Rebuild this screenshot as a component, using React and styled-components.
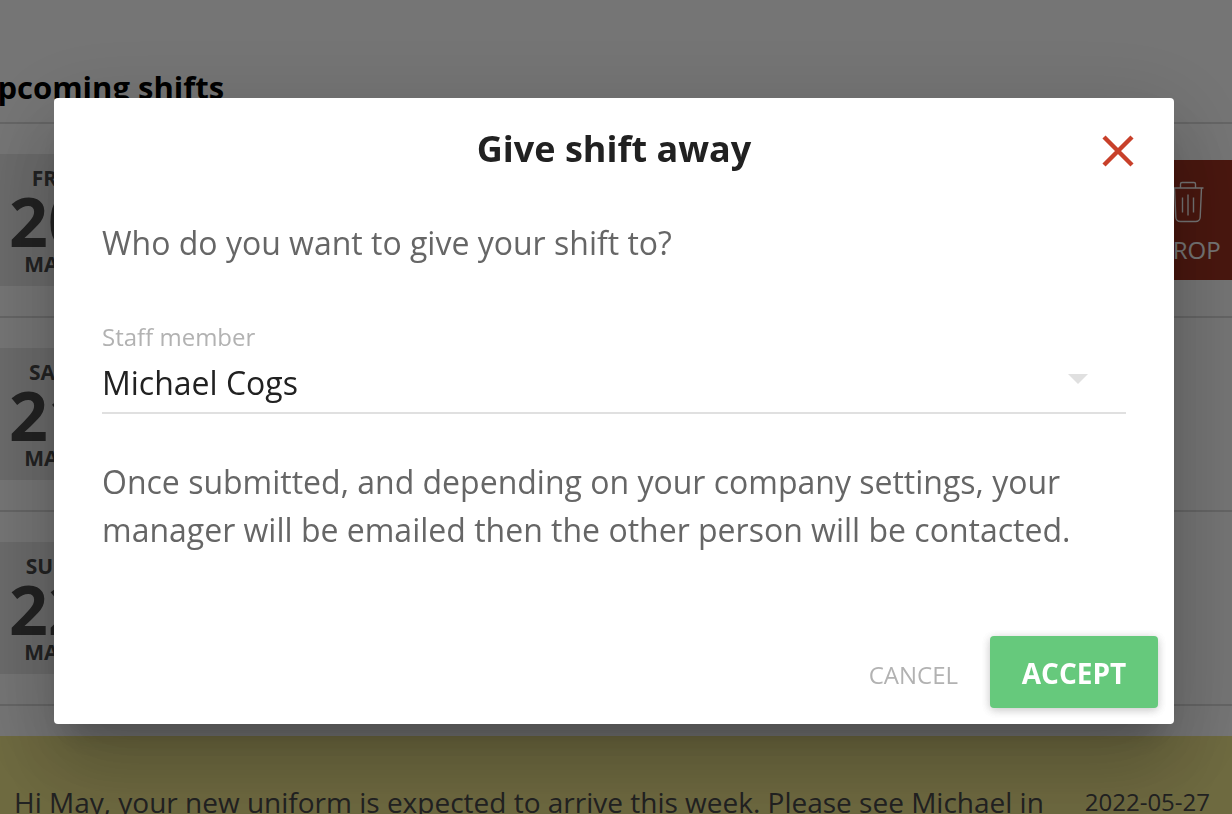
import React, { useState } from "react";
import styled, { createGlobalStyle } from "styled-components";

const GlobalStyle = createGlobalStyle`
  * { box-sizing: border-box; }
  body {
    margin: 0;
    background: #fff;
    color: #4a4a4a;
    font-family: "Open Sans", "Noto Sans", sans-serif;
  }
  h1, h2, p, ul { margin: 0; padding: 0; }
  button, select { font-family: inherit; border: 0; }
`;

const Page = styled.main`
  display: flex;
  flex-direction: column;
  height: 100vh;
  overflow: hidden;
`;

const Shifts = styled.section`
  margin: 0 -16px 0 -26px;
  padding-top: 64px;
`;

const Heading = styled.h1`
  height: 60px;
  border-bottom: 2px solid #dcdcdc;
  color: #000;
  font-size: 31px;
  font-weight: 700;
  line-height: 46px;
`;

const ShiftList = styled.ul`
  list-style: none;
`;

const ShiftRow = styled.li`
  display: flex;
  align-items: center;
  justify-content: space-between;
  padding: 30px 0;
  border-bottom: 2px solid #dcdcdc;
`;

const DateTile = styled.div`
  display: flex;
  flex-direction: column;
  align-items: center;
  justify-content: center;
  width: 148px;
  height: 132px;
  padding-top: 2px;
  background: #e8e8e8;
  font-weight: 700;
`;

const DatePart = styled.span`
  font-size: 21px;
  line-height: 24px;
`;

const DayNumber = styled.span`
  font-size: 68px;
  line-height: 62px;
`;

const DropButton = styled.button`
  display: flex;
  flex-direction: column;
  align-items: center;
  gap: 10px;
  width: 120px;
  height: 120px;
  padding: 20px 0 0;
  background: #a03220;
  color: #fff;
  font-size: 24px;
  line-height: 32px;
`;

const Notice = styled.section`
  display: flex;
  align-items: flex-start;
  justify-content: space-between;
  flex: 1 0 auto;
  margin-top: 30px;
  padding: 46px 22px 0 14px;
  background: #f0e68c;
`;

const NoticeText = styled.p`
  font-size: 28px;
  line-height: 40px;
`;

const NoticeDate = styled.time`
  font-size: 24px;
  line-height: 40px;
`;

const Overlay = styled.div`
  position: fixed;
  inset: 0;
  padding: 98px 58px 0 54px;
  background: rgba(0, 0, 0, 0.54);
`;

const Dialog = styled.div`
  display: flex;
  flex-direction: column;
  padding: 28px 16px 16px 48px;
  border-radius: 4px;
  background: #fff;
  box-shadow: 0 22px 30px -14px rgba(0, 0, 0, 0.2),
    0 48px 76px 6px rgba(0, 0, 0, 0.14), 0 18px 92px 16px rgba(0, 0, 0, 0.12);
`;

const DialogHeader = styled.header`
  display: grid;
  grid-template-columns: 24px 1fr 32px;
  align-items: end;
  padding-right: 24px;
`;

const Title = styled.h2`
  grid-column: 2;
  color: #212121;
  font-size: 36px;
  font-weight: 700;
  line-height: 46px;
  text-align: center;
`;

const CloseButton = styled.button`
  display: flex;
  padding: 0;
  margin-bottom: 5px;
  background: none;
  color: #c8402a;
`;

const DialogBody = styled.div`
  padding: 47px 32px 82px 0;
`;

const BodyText = styled.p`
  color: #666;
  font-size: 32px;
  line-height: 48px;
`;

const Field = styled.div`
  position: relative;
  display: flex;
  flex-direction: column;
  gap: 6px;
  margin: 54px 0 44px;
`;

const FieldLabel = styled.label`
  color: #b2b2b2;
  font-size: 24px;
  line-height: 32px;
`;

const Select = styled.select`
  appearance: none;
  width: 100%;
  height: 55px;
  padding: 0 64px 5px 0;
  border-bottom: 2px solid #e0e0e0;
  border-radius: 0;
  background: transparent;
  color: #212121;
  font-size: 32px;
  line-height: 48px;
`;

const SelectArrow = styled.span`
  position: absolute;
  right: 38px;
  bottom: 30px;
  border: 10px solid transparent;
  border-top-color: #e0e0e0;
  border-bottom: 0;
  pointer-events: none;
`;

const Actions = styled.footer`
  display: flex;
  justify-content: flex-end;
  gap: 16px;
`;

const ActionButton = styled.button`
  height: 72px;
  padding: ${(p) => (p.$primary ? "2px 16px 0" : "4px 16px 0")};
  border-radius: 4px;
  background: ${(p) => (p.$primary ? "#66c97c" : "transparent")};
  color: ${(p) => (p.$primary ? "#fff" : "#b2b2b2")};
  font-size: ${(p) => (p.$primary ? 28 : 24)}px;
  font-weight: ${(p) => (p.$primary ? 700 : 400)};
  min-width: ${(p) => (p.$primary ? "168px" : "0")};
  box-shadow: ${(p) =>
    p.$primary
      ? "0 2px 10px rgba(0, 0, 0, 0.12), 0 2px 10px rgba(0, 0, 0, 0.12)"
      : "none"};
`;

const shifts = [
  { weekday: "FRI", day: 20, month: "MAY", canDrop: true },
  { weekday: "SAT", day: 21, month: "MAY" },
  { weekday: "SUN", day: 22, month: "MAY" },
];

const TrashIcon = () => (
  <svg width="34" height="44" viewBox="0 0 34 44" fill="none" stroke="currentColor" strokeWidth="1.4" aria-hidden="true">
    <path d="M1.500 8h31M9.500 8V4a1.500 1.500 0 0 1 1.500-1.500h12a1.500 1.500 0 0 1 1.500 1.500V8" />
    <path d="M3.500 8l1.300 29a4.500 4.500 0 0 0 4.500 4.500h15.400a4.500 4.500 0 0 0 4.500-4.500L30.500 8" />
    <path d="M11.500 17.500v15M17 14.500v21M22.500 17.500v15" />
  </svg>
);

const CloseIcon = () => (
  <svg width="32" height="32" viewBox="0 0 32 32" fill="none" stroke="currentColor" strokeWidth="4.400" aria-hidden="true">
    <path d="M2 2l28 28M30 2L2 30" />
  </svg>
);

export default function App() {
  const [member, setMember] = useState("Michael Cogs");

  return (
    <>
      <GlobalStyle />
      <Page>
        <Shifts>
          <Heading>Upcoming shifts</Heading>
          <ShiftList>
            {shifts.map((shift) => (
              <ShiftRow key={shift.day}>
                <DateTile>
                  <DatePart>{shift.weekday}</DatePart>
                  <DayNumber>{shift.day}</DayNumber>
                  <DatePart>{shift.month}</DatePart>
                </DateTile>
                {shift.canDrop && (
                  <DropButton type="button">
                    <TrashIcon />
                    DROP
                  </DropButton>
                )}
              </ShiftRow>
            ))}
          </ShiftList>
        </Shifts>
        <Notice>
          <NoticeText>
            Hi May, your new uniform is expected to arrive this week. Please see Michael in
          </NoticeText>
          <NoticeDate dateTime="2022-05-27">2022-05-27</NoticeDate>
        </Notice>
      </Page>
      <Overlay>
        <Dialog role="dialog" aria-modal="true" aria-labelledby="dialog-title">
          <DialogHeader>
            <Title id="dialog-title">Give shift away</Title>
            <CloseButton type="button" aria-label="Close">
              <CloseIcon />
            </CloseButton>
          </DialogHeader>
          <DialogBody>
            <BodyText>Who do you want to give your shift to?</BodyText>
            <Field>
              <FieldLabel htmlFor="staff-member">Staff member</FieldLabel>
              <Select
                id="staff-member"
                value={member}
                onChange={(event) => setMember(event.target.value)}
              >
                <option>Michael Cogs</option>
              </Select>
              <SelectArrow />
            </Field>
            <BodyText>
              Once submitted, and depending on your company settings, your manager
              will be emailed then the other person will be contacted.
            </BodyText>
          </DialogBody>
          <Actions>
            <ActionButton type="button">CANCEL</ActionButton>
            <ActionButton type="button" $primary>
              ACCEPT
            </ActionButton>
          </Actions>
        </Dialog>
      </Overlay>
    </>
  );
}
